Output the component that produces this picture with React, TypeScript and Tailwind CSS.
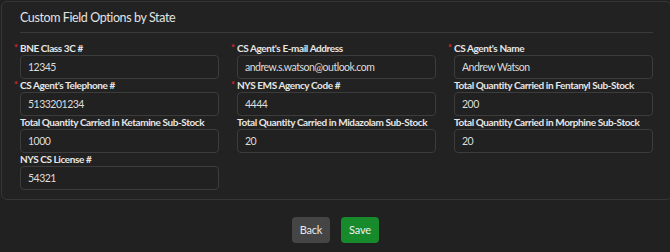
import React from "react";

type Field = { label: string; value: string; required?: boolean };

const fields: Field[] = [
    { label: "BNE Class 3C #", value: "12345", required: true },
    { label: "CS Agent's E-mail Address", value: "andrew.s.watson@outlook.com", required: true },
    { label: "CS Agent's Name", value: "Andrew Watson", required: true },
    { label: "CS Agent's Telephone #", value: "5133201234", required: true },
    { label: "NYS EMS Agency Code #", value: "4444", required: true },
    { label: "Total Quantity Carried in Fentanyl Sub-Stock", value: "200" },
    { label: "Total Quantity Carried in Ketamine Sub-Stock", value: "1000" },
    { label: "Total Quantity Carried in Midazolam Sub-Stock", value: "20" },
    { label: "Total Quantity Carried in Morphine Sub-Stock", value: "20" },
    { label: "NYS CS License #", value: "54321" },
];

function FieldBox({ field }: { field: Field }) {
    return (
        <div className="flex flex-col">
            <label className="relative h-[13px] whitespace-nowrap text-[10px] leading-[13px] font-bold tracking-[-0.4px] text-[#e6e6e6]">
                {field.required && (
                    <span className="absolute -left-[6px] -top-[1px] text-[9px] text-[#e02424]">*</span>
                )}
                {field.label}
            </label>
            <input
                readOnly
                value={field.value}
                className="h-[24px] rounded-[4px] border border-[#3c3c3c] bg-[#212121] px-[7px] text-[10.5px] tracking-[-0.5px] text-[#dcdcdc] outline-none"
            />
        </div>
    );
}

export default function App() {
    return (
        <div
            className="h-[252px] w-[670px] overflow-hidden bg-[#212121] pl-px pt-px"
            style={{ fontFamily: "Lato, \"Noto Sans\", sans-serif" }}
        >
            <div className="w-[671px] rounded-[6px] border border-[#363636] bg-[#222222] px-[18px] pb-[9px]">
                <div className="pt-[6px] pb-[4px] text-[12.5px] leading-[20px] tracking-[-0.4px] text-[#e2e2e2]">
                    Custom Field Options by State
                </div>
                <div className="h-px bg-[#3a3a3a]" />
                <div className="mt-[9px] grid grid-cols-3 gap-x-[18px]">
                    {fields.map((f) => (
                        <FieldBox key={f.label} field={f} />
                    ))}
                </div>
            </div>
            <div className="mt-[17px] flex justify-center gap-[11px]">
                <button className="h-[26px] w-[38px] rounded-[4px] bg-[#454545] text-[11px] tracking-[-0.2px] text-[#e8e8e8]">
                    Back
                </button>
                <button className="h-[26px] w-[38px] rounded-[4px] bg-[#178a2c] text-[11px] tracking-[-0.2px] text-[#f0f0f0]">
                    Save
                </button>
            </div>
        </div>
    );
}
